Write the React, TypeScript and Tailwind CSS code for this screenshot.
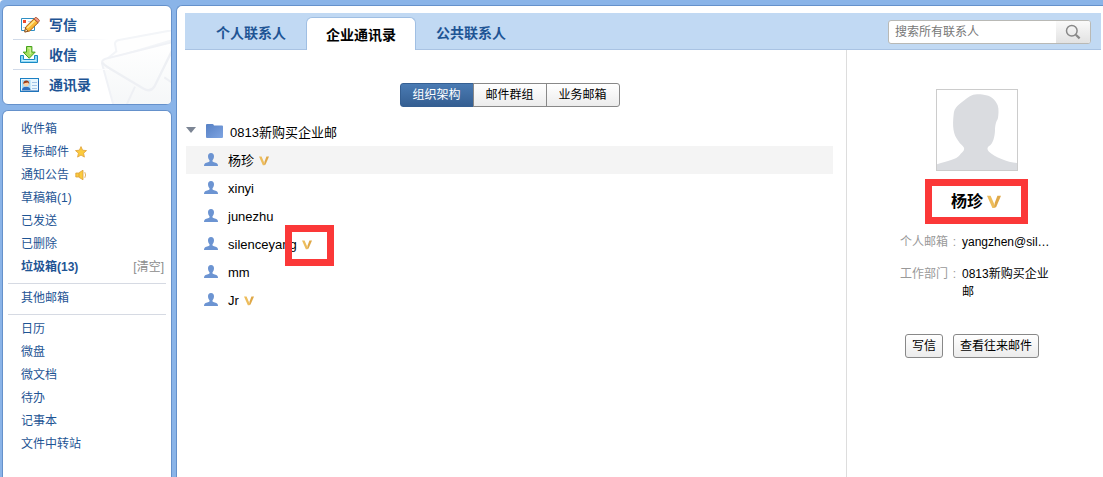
import { useState } from "react";

type FolderItem = {
  label: string;
  count?: number;
  bold?: boolean;
  icon?: "star" | "horn";
  action?: string;
};

type Member = {
  name: string;
  verified?: boolean;
  marked?: boolean;
};

const folderGroups: FolderItem[][] = [
  [
    { label: "收件箱" },
    { label: "星标邮件", icon: "star" },
    { label: "通知公告", icon: "horn" },
    { label: "草稿箱", count: 1 },
    { label: "已发送" },
    { label: "已删除" },
    { label: "垃圾箱", count: 13, bold: true, action: "[清空]" },
  ],
  [{ label: "其他邮箱" }],
  [
    { label: "日历" },
    { label: "微盘" },
    { label: "微文档" },
    { label: "待办" },
    { label: "记事本" },
    { label: "文件中转站" },
  ],
];

const members: Member[] = [
  { name: "杨珍", verified: true },
  { name: "xinyi" },
  { name: "junezhu" },
  { name: "silenceyang", verified: true, marked: true },
  { name: "mm" },
  { name: "Jr", verified: true },
];

const tabs = ["个人联系人", "企业通讯录", "公共联系人"];
const views = ["组织架构", "邮件群组", "业务邮箱"];

export default function App() {
  return (
    <div className="min-h-screen bg-white font-['Liberation_Sans','Noto_Sans_CJK_SC',sans-serif] text-xs text-black">
      <div className="flex min-h-screen gap-1 rounded-tl bg-[#8ab4e8] pl-0.5 pt-[5px]">
        <Sidebar />
        <main className="flex min-w-0 flex-1 flex-col rounded-tl-md border-l border-t border-[#6591cb] bg-white pl-2 pr-0.5 pt-[7px]">
          <TopBar />
          <div className="flex flex-1">
            <Organization />
            <Profile />
          </div>
        </main>
      </div>
    </div>
  );
}

function Sidebar() {
  return (
    <aside className="flex w-[170px] shrink-0 flex-col gap-[5px] text-[#1e5494]">
      <nav className="relative rounded-md border border-[#6591cb] bg-white pb-[5px] pt-1 text-sm font-bold">
        <EnvelopeArt />
        <ComposeLink label="写信" icon={<WriteIcon />} />
        <Fade />
        <ComposeLink label="收信" icon={<ReceiveIcon />} />
        <Fade />
        <ComposeLink label="通讯录" icon={<CardIcon />} />
      </nav>
      <nav className="flex-1 rounded-t-md border border-b-0 border-[#6591cb] bg-white px-[5px] pt-1.5">
        {folderGroups.map((group, i) => (
          <div key={i}>
            {i > 0 && <hr className="mb-0.5 mt-[5px] border-[#d6dae3]" />}
            <ul>
              {group.map((item) => (
                <li key={item.label} className="flex h-[23px] items-center pl-[13px] pr-0.5">
                  <a href="#" className={item.bold ? "font-bold" : ""}>
                    {item.label}
                    {item.count !== undefined && `(${item.count})`}
                  </a>
                  {item.icon === "star" && <StarIcon />}
                  {item.icon === "horn" && <HornIcon />}
                  {item.action && (
                    <button type="button" className="ml-auto text-[#8c8c8c]">
                      {item.action}
                    </button>
                  )}
                </li>
              ))}
            </ul>
          </div>
        ))}
      </nav>
    </aside>
  );
}

function ComposeLink({ label, icon }: { label: string; icon: React.ReactNode }) {
  return (
    <a href="#" className="relative flex h-[29px] items-center gap-[9px] pl-[17px]">
      {icon}
      {label}
    </a>
  );
}

const Fade = () => <div className="relative ml-2.5 h-px w-24 bg-linear-to-r from-[#cfd9e8] to-white" />;

function TopBar() {
  const [active, setActive] = useState(tabs[1]);

  return (
    <header className="flex h-[37px] justify-between bg-[#c1d9f3] pl-[11px] shadow-[inset_0_-1px_0_#a9c3e3]">
      <div className="flex items-end text-sm font-bold" role="tablist">
        {tabs.map((tab) => (
          <button
            key={tab}
            type="button"
            role="tab"
            aria-selected={tab === active}
            onClick={() => setActive(tab)}
            className={
              tab === active
                ? "h-[33px] rounded-t-md border border-b-0 border-[#a0bfe3] bg-white px-[19px] pt-0.5"
                : "h-[33px] px-5 pb-0.5 text-[#1e5494]"
            }
          >
            {tab}
          </button>
        ))}
      </div>
      <form className="mr-2.5 mt-[7px] flex h-6 w-[203px] overflow-hidden rounded-[3px] border border-[#b9b9b5] bg-white">
        <input
          type="text"
          aria-label="搜索所有联系人"
          placeholder="搜索所有联系人"
          className="min-w-0 flex-1 px-1.5 outline-none placeholder:text-[#777]"
        />
        <button
          type="button"
          aria-label="搜索"
          className="flex w-[34px] items-center justify-center bg-linear-to-b from-[#fafafa] to-[#e2e2e2]"
        >
          <svg className="size-4" viewBox="0 0 16 16" fill="none" stroke="#888">
            <circle cx="6.8" cy="6.8" r="5.3" strokeWidth="1.5" />
            <path d="M10.8 10.8 14.6 14.4" strokeWidth="2.2" />
          </svg>
        </button>
      </form>
    </header>
  );
}

function Organization() {
  const [view, setView] = useState(views[0]);

  return (
    <section className="min-w-0 flex-1 pl-px pr-[13px] pt-[33px]">
      <div className="flex justify-center">
        <div className="flex h-6 w-[220px]">
          {views.map((name) => (
            <button
              key={name}
              type="button"
              onClick={() => setView(name)}
              className={
                name === view
                  ? "flex-1 border border-[#355f92] bg-linear-to-b from-[#4a7bb3] to-[#355f92] text-white first:rounded-l-[3px] last:rounded-r-[3px]"
                  : "-ml-px flex-1 border border-[#888] bg-linear-to-b from-white to-[#ececec] first:rounded-l-[3px] last:rounded-r-[3px]"
              }
            >
              {name}
            </button>
          ))}
        </div>
      </div>
      <div className="mt-[11px] text-[13px]">
        <button type="button" className="flex h-7 items-center">
          <svg className="mb-1 h-1.5 w-2.5" viewBox="0 0 10 6">
            <path d="M0 0h10L5 6z" fill="#7c8594" />
          </svg>
          <FolderIcon />
          <span className="pt-px">0813新购买企业邮</span>
        </button>
        <ul>
          {members.map((m) => (
            <li key={m.name} className="flex h-7 items-center pl-[18px] first:bg-[#f4f4f4]">
              <PersonIcon />
              <a href="#" className="pt-0.5">
                {m.name}
              </a>
              {m.verified && (
                <span className="relative ml-[5px] pt-0.5">
                  <VerifiedIcon className="size-2.5" />
                  {m.marked && (
                    <span className="absolute -left-[17px] -top-[13px] h-[41px] w-[49px] border-[7px] border-[#fb3838]" />
                  )}
                </span>
              )}
            </li>
          ))}
        </ul>
      </div>
    </section>
  );
}

function Profile() {
  return (
    <section className="w-[255px] shrink-0 border-l border-[#ddd] pl-[53px] pt-[39px]">
      <div className="flex w-[154px] flex-col items-center">
        <div className="size-[82px] border border-[#ccc]">
          <svg className="size-full" viewBox="0 0 240 240">
            <path
              d="M120 13c-16 0-28 10-38 18-16 12-31 22-32 42-4 36-2 60 14 80 6 10 14 14 17 20 2 10-6 13-12 21-12 16-36 17-69 29v17h240v-21c-30-3-66-18-84-34-6-5-6-12-1-16 14-8 18-30 19-47 0-14 3-28 8-34 3-12 4-30 0-42-7-18-22-30-42-32-6-1-13-1-20-1z"
              fill="#dadce0"
            />
          </svg>
        </div>
        <h2 className="mr-0.5 mt-2 flex h-[45px] w-[103px] items-center justify-center gap-1 border-[7px] border-[#fb3838] text-base font-bold">
          杨珍
          <VerifiedIcon className="size-3.5" />
        </h2>
      </div>
      <dl className="mt-[9px] grid grid-cols-[62px_88px] gap-y-3.5 leading-[18px]">
        <dt className="flex justify-between pr-1.5 text-[#999]">
          个人邮箱<span>:</span>
        </dt>
        <dd>yangzhen@sil…</dd>
        <dt className="flex justify-between pr-1.5 text-[#999]">
          工作部门<span>:</span>
        </dt>
        <dd>0813新购买企业邮</dd>
      </dl>
      <div className="mt-[33px] flex gap-2.5 pl-[5px]">
        <GrayButton label="写信" />
        <GrayButton label="查看往来邮件" />
      </div>
    </section>
  );
}

const GrayButton = ({ label }: { label: string }) => (
  <button
    type="button"
    className="h-6 rounded-[3px] border border-[#888] bg-linear-to-b from-white to-[#ececec] px-1.5"
  >
    {label}
  </button>
);

function EnvelopeArt() {
  return (
    <svg className="absolute bottom-0 right-0 h-[74px] w-[72px] rounded-br" viewBox="0 0 216 222" fill="none">
      <defs>
        <linearGradient id="paper" x1="0" y1="0" x2="0" y2="1">
          <stop offset="0" stopColor="#ffffff" />
          <stop offset="1" stopColor="#f5f7f8" />
        </linearGradient>
      </defs>
      <path d="M52 64 48 42q0-10 12-12L222 0v30L20 90z" fill="#fefefe" stroke="#f3f5f8" strokeWidth="6" />
      <path d="M222 36 20 86q-14 4-10 18l34 124h184z" fill="url(#paper)" stroke="#f0f2f6" strokeWidth="6" />
      <path d="M10 98q4 6 20 16l104 62q20 12 32-6l56-114" stroke="#eef0f4" strokeWidth="7" />
      <path d="M108 170 82 226M196 142l26 18" stroke="#eef0f4" strokeWidth="6" />
    </svg>
  );
}

function WriteIcon() {
  return (
    <svg className="h-4 w-5" viewBox="0 0 20 16">
      <path d="M1.5 1.5h13v12h-13z" fill="#fff" stroke="#2f8fc4" />
      <path d="M3 3h3v3H3z" fill="#ee4a2c" />
      <path d="M8 4.5h3M3 10.5h2" stroke="#b9d3e8" />
      <path d="m4.8 15 .9-5L14 1.8l4.2 3.8L9.6 14z" fill="#fbb833" stroke="#a55a12" />
      <path d="m7.2 11 7.6-7.4" stroke="#ffe48c" strokeWidth="1.7" />
      <path d="m14 1.8 1.2-1.2q.8-.5 1.6.2l2.2 2q.8.8 0 1.6l-.9 1.2z" fill="#f59a86" stroke="#a8542c" strokeWidth=".9" />
      <path d="m4.8 15 .7-3.6L8 14z" fill="#f9e3c0" stroke="#7a4415" strokeWidth=".7" />
    </svg>
  );
}

function ReceiveIcon() {
  return (
    <svg className="h-[18px] w-5" viewBox="0 0 20 18">
      <path d="M.5 9.5h3v4h11v-4h3v7H.5z" fill="#8fd8f5" stroke="#1a8ac4" />
      <path d="M2 14.5h14" stroke="#d2f2fd" />
      <path d="M6.5.5h5.4v5.6h3.3L9.2 12.3 3.2 6.1h3.3z" fill="#a6e05f" stroke="#45a01e" />
      <path d="M8 2h2.2v6" stroke="#dcf7b0" fill="none" />
    </svg>
  );
}

function CardIcon() {
  return (
    <svg className="h-3.5 w-5" viewBox="0 0 20 14">
      <rect x=".5" y=".5" width="18" height="13" fill="#e9f6fe" stroke="#1b80c4" />
      <path d="M1.5 13h17V3" fill="none" stroke="#2466b0" />
      <rect x="2" y="2" width="8.5" height="10" fill="#a9dcf8" />
      <path d="M2 12q.4-3.3 4.2-3.3T10.5 12z" fill="#2c6fc0" />
      <circle cx="6.2" cy="5.8" r="2.6" fill="#fbd0a4" />
      <path d="M3.3 6q-.2-3.6 3-3.6T9.2 6L8 4.6 5 5z" fill="#9a3c18" />
      <path d="M12 4.5h5M12 7.5h5M12 10.5h5" stroke="#a3c5e8" />
    </svg>
  );
}

const StarIcon = () => (
  <svg className="ml-1.5 size-3" viewBox="0 0 12 12">
    <path
      d="m6 .6 1.6 3.6 3.9.4-2.9 2.6.8 3.9L6 9.1l-3.4 2 .8-3.9L.5 4.6l3.9-.4z"
      fill="#fccb3c"
      stroke="#dfa13a"
      strokeWidth=".8"
    />
  </svg>
);

const HornIcon = () => (
  <svg className="ml-1.5 size-3" viewBox="0 0 12 12">
    <path d="M.8 4h2.7L8 1.2v9.6L3.5 8H.8z" fill="#fccb3c" stroke="#dba03a" strokeWidth=".8" />
    <path d="M4 4v4" stroke="#dba03a" strokeWidth=".8" />
    <path d="M9.8 3.2q1.6 2.8 0 5.6" fill="none" stroke="#e3b15e" />
  </svg>
);

const FolderIcon = () => (
  <svg className="mb-0.5 ml-2.5 mr-[7px] h-3.5 w-[17px]" viewBox="0 0 17 14">
    <defs>
      <linearGradient id="folder" x1="0" y1="0" x2="1" y2="1">
        <stop offset="0" stopColor="#5680c4" />
        <stop offset="1" stopColor="#7fa5e2" />
      </linearGradient>
    </defs>
    <path d="M0 1q0-1 1-1h5.5q.7 0 1 .6L8 1.6h8q1 0 1 1V13q0 1-1 1H1q-1 0-1-1z" fill="url(#folder)" />
  </svg>
);

const PersonIcon = () => (
  <svg className="mb-px mr-2.5 h-[13px] w-3.5" viewBox="0 0 14 13">
    <path
      d="M7 0C4.9 0 4 1.3 4 3.2 4 5 4.8 6.500 5.500 7.300v1C5 9.500 1.500 9.300.5 11 .1 11.600 0 12.300 0 13h14c0-.7-.1-1.400-.5-2-1-1.700-4.500-1.500-5-2.700v-1C9.200 6.500 10 5 10 3.200 10 1.300 9.100 0 7 0z"
      fill="#6c94d2"
    />
  </svg>
);

const VerifiedIcon = ({ className }: { className: string }) => (
  <svg className={className} viewBox="0 0 14 14">
    <path d="M0 .8h3.600L6.900 8.300 8.200 11 7.400 13H5.400z" fill="#edbd5c" />
    <path d="M10.400.8H14L9.200 12 7.400 13l.3-5z" fill="#dfa848" />
  </svg>
);
